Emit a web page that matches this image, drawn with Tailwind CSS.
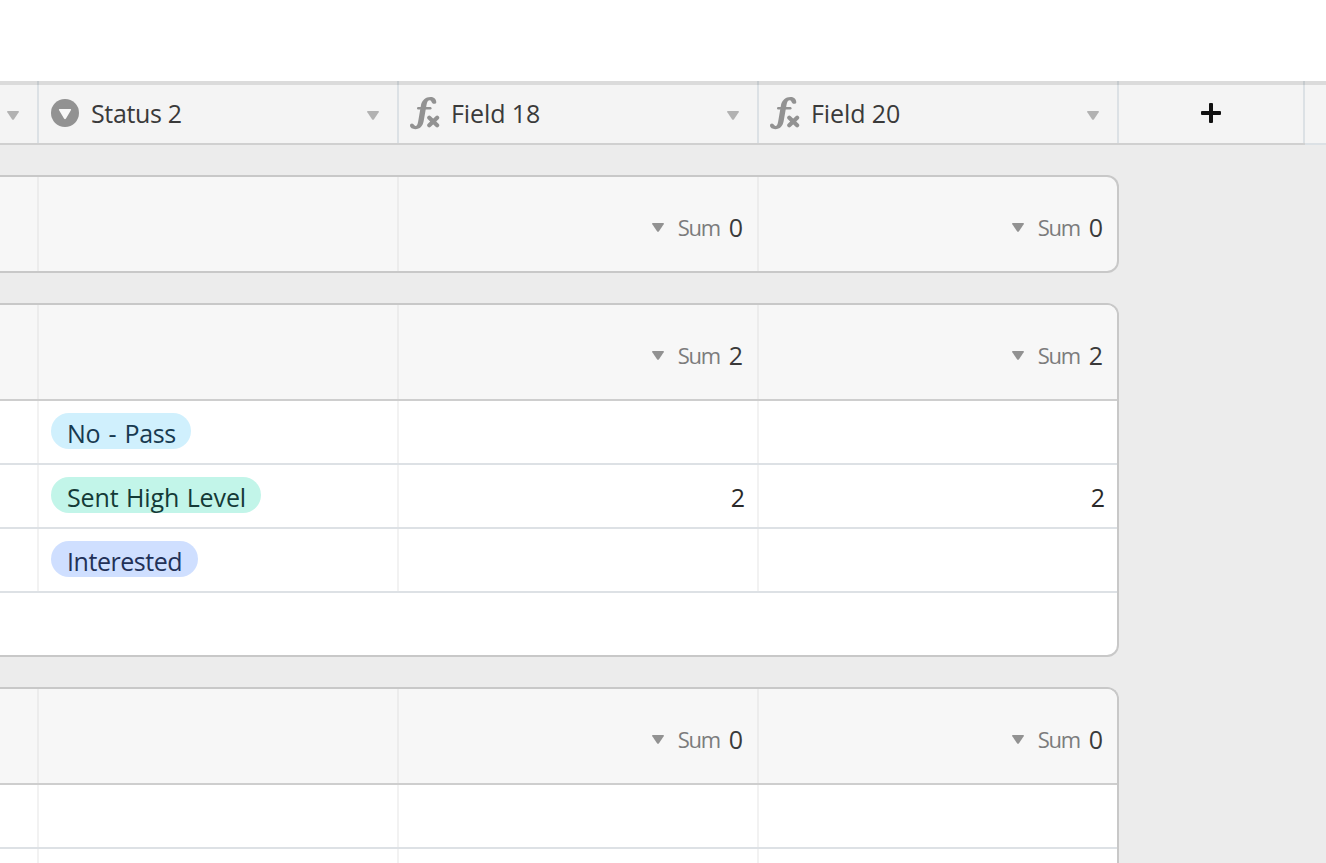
<!doctype html>
<html lang="en">

<head>
    <meta charset="UTF-8">
    <meta name="viewport" content="width=device-width, initial-scale=1.0">
    <title>Grid view</title>
    <script src="https://cdn.jsdelivr.net/npm/@tailwindcss/browser@4"></script>
</head>

<body class="h-[863px] w-[1326px] overflow-hidden bg-[#ececec] font-['Open_Sans','Noto_Sans',sans-serif] text-[25px] leading-9 text-[#3a3a3a]">
    <svg class="hidden">
        <symbol id="caret" viewBox="0 0 12 9">
            <path d="M1 0h10q1.500 0 .7 1.300L7 8.200q-1 1.300-2 0L.3 1.300Q-.5 0 1 0z" />
        </symbol>
        <symbol id="formula" viewBox="0 0 30 33">
            <path d="M26.300 5.200C26.300 1.800 23.500 0 20.500 0C15.500 0 12 3.300 11 8L8.600 22C7.900 26.500 7.300 29 5.500 29C4.200 29 3.900 26.500 2 26.500C.8 26.500 0 27.400 0 28.600C0 30.800 2.500 32.200 5.300 32.200C10 32.200 12.800 29 13.700 24L16.500 8C17.200 4.500 18 3.200 19.800 3.200C21.800 3.200 21.400 6.800 24 6.800C25.400 6.800 26.300 6.200 26.300 5.200Z" fill="currentColor" />
            <g fill="none" stroke="currentColor" stroke-linecap="round">
                <path d="M8.200 11.200H20.300" stroke-width="2.400" />
                <path d="M19.300 20.800l7.800 7.400M27.100 20.800l-7.800 7.400" stroke-width="4.200" />
            </g>
        </symbol>
    </svg>

    <div class="h-[81px] bg-white"></div>

    <!-- Column headers -->
    <header class="relative flex h-16 bg-[#f4f4f4]">
        <div class="absolute inset-x-0 top-0 h-1 bg-black/10"></div>
        <div class="flex w-[1305px] border-b-2 border-[#d0d0d0]">
            <div class="flex w-[39px] items-center border-r-2 border-[#dce1e5] pl-[7px] pt-0.5">
                <svg class="mt-1 h-[9px] w-3 fill-[#b2b2b2]"><use href="#caret" /></svg>
            </div>
            <div class="flex w-[360px] items-center border-r-2 border-[#dce1e5] pl-3 pr-[18px] pt-0.5">
                <svg class="h-7 w-7" viewBox="0 0 28 28">
                    <circle cx="14" cy="14" r="14" fill="#929292" />
                    <path d="M8.800 10h10.400q1.500 0 .7 1.300L15 19.600q-1 1.400-2 0L8.100 11.300Q7.300 10 8.800 10z" fill="#f8f8f8" />
                </svg>
                <span class="ml-3 tracking-[-0.35px]">Status 2</span>
                <svg class="ml-auto mt-1 h-[9px] w-3 fill-[#b2b2b2]"><use href="#caret" /></svg>
            </div>
            <div class="flex w-[360px] items-center border-r-2 border-[#dce1e5] pl-[11px] pr-[18px] pt-0.5">
                <svg class="h-[33px] w-[30px] text-[#929292]"><use href="#formula" /></svg>
                <span class="ml-[11px] tracking-[-0.1px]">Field 18</span>
                <svg class="ml-auto mt-1 h-[9px] w-3 fill-[#b2b2b2]"><use href="#caret" /></svg>
            </div>
            <div class="flex w-[360px] items-center border-r-2 border-[#dce1e5] pl-[11px] pr-[18px] pt-0.5">
                <svg class="h-[33px] w-[30px] text-[#929292]"><use href="#formula" /></svg>
                <span class="ml-[11px] tracking-[-0.1px]">Field 20</span>
                <svg class="ml-auto mt-1 h-[9px] w-3 fill-[#b2b2b2]"><use href="#caret" /></svg>
            </div>
            <div class="flex w-[186px] items-center justify-center border-r-2 border-[#dce1e5] pt-0.5">
                <svg class="h-5 w-5 fill-[#111]" viewBox="0 0 20 20">
                    <path d="M9 0h2q1 0 1 1v7h7q1 0 1 1v2q0 1-1 1h-7v7q0 1-1 1H9q-1 0-1-1v-7H1q-1 0-1-1V9q0-1 1-1h7V1q0-1 1-1z" />
                </svg>
            </div>
        </div>
        <div class="flex-1 border-b-2 border-[#dce1e5]"></div>
    </header>

    <!-- Groups -->
    <main class="flex h-[718px] w-[1119px] flex-col gap-[30px] overflow-hidden pt-[30px]">
        <section class="shrink-0 overflow-hidden rounded-r-xl border-2 border-l-0 border-[#c8c8c8] bg-[#f7f7f7]">
            <div class="flex h-[94px]">
                <div class="w-[39px] border-r-2 border-[#ececec]"></div>
                <div class="w-[360px] border-r-2 border-[#ececec]"></div>
                <div class="flex w-[360px] items-center justify-end border-r-2 border-[#ececec] pr-3.5 pt-1.5">
                    <svg class="h-[9px] w-3 fill-[#929292]"><use href="#caret" /></svg>
                    <span class="ml-3.5 w-[43px] text-[22px] tracking-[-1.2px] text-[#7c7c7c]">Sum</span>
                    <span class="ml-2">0</span>
                </div>
                <div class="flex flex-1 items-center justify-end pr-3.5 pt-1.5">
                    <svg class="h-[9px] w-3 fill-[#929292]"><use href="#caret" /></svg>
                    <span class="ml-3.5 w-[43px] text-[22px] tracking-[-1.2px] text-[#7c7c7c]">Sum</span>
                    <span class="ml-2">0</span>
                </div>
            </div>
        </section>

        <section class="shrink-0 overflow-hidden rounded-r-xl border-2 border-l-0 border-[#c8c8c8] bg-white">
            <div class="flex h-24 border-b-2 border-[#cecece] bg-[#f7f7f7]">
                <div class="w-[39px] border-r-2 border-[#ececec]"></div>
                <div class="w-[360px] border-r-2 border-[#ececec]"></div>
                <div class="flex w-[360px] items-center justify-end border-r-2 border-[#ececec] pr-3.5 pt-1.5">
                    <svg class="h-[9px] w-3 fill-[#929292]"><use href="#caret" /></svg>
                    <span class="ml-3.5 w-[43px] text-[22px] tracking-[-1.2px] text-[#7c7c7c]">Sum</span>
                    <span class="ml-2">2</span>
                </div>
                <div class="flex flex-1 items-center justify-end pr-3.5 pt-1.5">
                    <svg class="h-[9px] w-3 fill-[#929292]"><use href="#caret" /></svg>
                    <span class="ml-3.5 w-[43px] text-[22px] tracking-[-1.2px] text-[#7c7c7c]">Sum</span>
                    <span class="ml-2">2</span>
                </div>
            </div>
            <div class="flex h-16 border-b-2 border-[#dde1e5]">
                <div class="w-[39px] border-r-2 border-[#f2f2f2]"></div>
                <div class="w-[360px] border-r-2 border-[#f2f2f2] pl-3 pt-3">
                    <div class="h-9 w-[140px] rounded-full bg-[#d0f0fd] pl-4 pt-0.5 tracking-[-0.3px] text-[#183a50] [word-spacing:2px]">No - Pass</div>
                </div>
                <div class="w-[360px] border-r-2 border-[#f2f2f2]"></div>
            </div>
            <div class="flex h-16 border-b-2 border-[#dde1e5]">
                <div class="w-[39px] border-r-2 border-[#f2f2f2]"></div>
                <div class="w-[360px] border-r-2 border-[#f2f2f2] pl-3 pt-3">
                    <div class="h-9 w-[210px] rounded-full bg-[#c2f5e9] pl-4 pt-0.5 tracking-[-0.1px] text-[#143a37] [word-spacing:1px]">Sent High Level</div>
                </div>
                <div class="w-[360px] border-r-2 border-[#f2f2f2] pr-3 pt-3.5 text-right text-[#2a2a2a]">2</div>
                <div class="flex-1 pr-3 pt-3.5 text-right text-[#2a2a2a]">2</div>
            </div>
            <div class="flex h-16 border-b-2 border-[#dde1e5]">
                <div class="w-[39px] border-r-2 border-[#f2f2f2]"></div>
                <div class="w-[360px] border-r-2 border-[#f2f2f2] pl-3 pt-3">
                    <div class="h-9 w-[147px] rounded-full bg-[#cfdfff] pl-4 pt-0.5 tracking-[-0.45px] text-[#223158]">Interested</div>
                </div>
                <div class="w-[360px] border-r-2 border-[#f2f2f2]"></div>
            </div>
            <div class="h-[62px]"></div>
        </section>

        <section class="shrink-0 overflow-hidden rounded-tr-xl border-2 border-b-0 border-l-0 border-[#c8c8c8] bg-white">
            <div class="flex h-24 border-b-2 border-[#cecece] bg-[#f7f7f7]">
                <div class="w-[39px] border-r-2 border-[#ececec]"></div>
                <div class="w-[360px] border-r-2 border-[#ececec]"></div>
                <div class="flex w-[360px] items-center justify-end border-r-2 border-[#ececec] pr-3.5 pt-1.5">
                    <svg class="h-[9px] w-3 fill-[#929292]"><use href="#caret" /></svg>
                    <span class="ml-3.5 w-[43px] text-[22px] tracking-[-1.2px] text-[#7c7c7c]">Sum</span>
                    <span class="ml-2">0</span>
                </div>
                <div class="flex flex-1 items-center justify-end pr-3.5 pt-1.5">
                    <svg class="h-[9px] w-3 fill-[#929292]"><use href="#caret" /></svg>
                    <span class="ml-3.5 w-[43px] text-[22px] tracking-[-1.2px] text-[#7c7c7c]">Sum</span>
                    <span class="ml-2">0</span>
                </div>
            </div>
            <div class="flex h-16 border-b-2 border-[#dde1e5]">
                <div class="w-[39px] border-r-2 border-[#f2f2f2]"></div>
                <div class="w-[360px] border-r-2 border-[#f2f2f2]"></div>
                <div class="w-[360px] border-r-2 border-[#f2f2f2]"></div>
            </div>
            <div class="flex h-3.5">
                <div class="w-[39px] border-r-2 border-[#f2f2f2]"></div>
                <div class="w-[360px] border-r-2 border-[#f2f2f2]"></div>
                <div class="w-[360px] border-r-2 border-[#f2f2f2]"></div>
            </div>
        </section>
    </main>
</body>

</html>
